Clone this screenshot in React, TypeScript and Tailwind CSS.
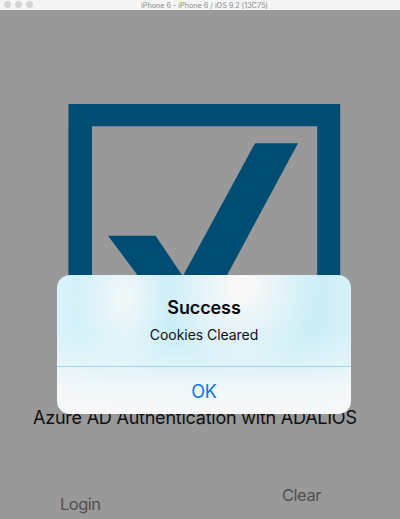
function TitleBar() {
  return (
    <header className="grid h-[10px] grid-cols-[1fr_auto_1fr] items-center bg-[#f5f5f5] pl-1">
      <div className="flex gap-[4px]">
        <span className="mt-[-1px] size-[7px] rounded-full bg-[#d5d5d5]" />
        <span className="mt-[-1px] size-[7px] rounded-full bg-[#d5d5d5]" />
        <span className="mt-[-1px] size-[7px] rounded-full bg-[#d5d5d5]" />
      </div>
      <h1 className="mr-[-5px] text-[7.3px] leading-[9px] tracking-[-0.04px] whitespace-nowrap text-[#8c8c8c]">
        iPhone 6 - iPhone 6 / iOS 9.2 (13C75)
      </h1>
    </header>
  );
}

function CheckboxLogo() {
  return (
    <svg className="ml-[68px] block h-[272px] w-[273px]" viewBox="68 104 273 272" fill="#004d73" aria-hidden="true">
      <path fillRule="evenodd" d="M68.4 104H340.2V376H68.4ZM92 126.2V353H317.2V126.2Z" />
      <path d="M108 235.7H155.6L182.8 276.3L255 143.2H298L207 312.5Q186 342 165 312Z" />
    </svg>
  );
}

function Alert() {
  return (
    <section
      role="alertdialog"
      className="absolute top-[275px] left-[57px] flex h-[139px] w-[294px] flex-col overflow-hidden rounded-[13px] bg-[linear-gradient(to_bottom,#f6f8fa00_40%,#f6f8fa80_67%,#f6f8fadd_80%,#f6f8fa_96%),radial-gradient(ellipse_80px_88px_at_184px_12px,#f8f8f8_12%,#f8f8f890_52%,#f8f8f800_100%),radial-gradient(ellipse_48px_80px_at_67px_24px,#f0f7f9_10%,#f0f7f990_48%,#f0f7f900_100%),linear-gradient(to_right,#d8f2fa_0%,#cdf0f9_20%,#c8edf8_43%,#c8eef8_85%,#d6f1f8_100%)] text-center"
    >
      <div className="flex h-[92px] flex-col border-b border-[#a3d6e4] pt-[21px]">
        <h2 className="text-[18px] leading-6 font-semibold tracking-[-0.1px] text-[#0a0a0a]">Success</h2>
        <p className="mt-[5px] text-[14px] leading-[20px] tracking-[-0.05px] text-[#101010]">Cookies Cleared</p>
      </div>
      <button className="h-[47px] pt-[2px] text-[18px] leading-6 tracking-[-0.3px] text-[#0876f5]">OK</button>
    </section>
  );
}

export default function App() {
  return (
    <div className="relative h-[519px] w-[400px] overflow-hidden bg-[#999999] font-[Inter,sans-serif]">
      <TitleBar />
      <main className="pt-[94px]">
        <CheckboxLogo />
        <p className="mt-[30px] ml-[33px] text-[18px] leading-6 tracking-[-0.23px] whitespace-nowrap text-[#101010]">
          Azure AD Authentication with ADALIOS
        </p>
        <div className="mt-[53px] flex items-start justify-between pr-[79px] pl-[60px] text-[16.5px] leading-6 text-[#505050]">
          <button className="mt-[9px] tracking-[-0.5px]">Login</button>
          <button className="tracking-[-0.45px]">Clear</button>
        </div>
      </main>
      <Alert />
    </div>
  );
}
